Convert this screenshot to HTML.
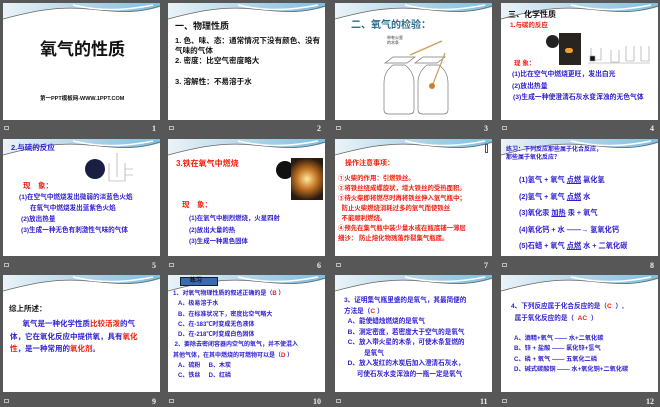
<!DOCTYPE html>
<html><head><meta charset="utf-8"><style>
*{margin:0;padding:0;box-sizing:border-box}
body{width:660px;height:407px;background:#575757;position:relative;overflow:hidden;font-family:"Liberation Sans","Noto Sans CJK SC",sans-serif;font-weight:bold}
.s{position:absolute;width:157px;height:117px;background:#fff;overflow:hidden}
.s svg.h{position:absolute;left:0;top:0}
.t{position:absolute;white-space:nowrap;line-height:1}
.n{position:absolute;color:#eee;font-size:8px;font-family:"Liberation Serif",serif}
.ic{position:absolute;width:5px;height:4px;border:1px solid #bbb}
.b{color:#3020d0}.r{color:#f02010}.k{color:#111}
</style></head><body>

<svg width="0" height="0" style="position:absolute"><defs>
<linearGradient id="g" x1="0" x2="1"><stop offset="0" stop-color="#eaf3f8"/><stop offset="0.6" stop-color="#a8d0e6"/><stop offset="1" stop-color="#7fbfe0"/></linearGradient>
<g id="hd"><path d="M0 0H157V4C130 12 110 8 85 6C55 3 30 8 0 16Z" fill="url(#g)"/><path d="M0 16C30 8 55 3 85 6C110 8 130 12 157 3" fill="none" stroke="#666" stroke-width="0.8"/><path d="M70 2C95 8 120 8 150 2" fill="none" stroke="#fff" stroke-width="1.5"/></g>
</defs></svg>

<!-- Row 1 -->
<div class="s" style="left:3px;top:3px"><svg class="h" width="157" height="20"><use href="#hd"/></svg>
<div class="t k" style="left:37px;top:38px;font-size:17px">氧气的性质</div>
<div class="t k" style="left:37px;top:94px;font-size:5.5px">第一PPT模板网-WWW.1PPT.COM</div></div>
<div class="ic" style="left:4px;top:126px"></div><div class="n" style="left:152px;top:124px">1</div>

<div class="s" style="left:168px;top:3px"><svg class="h" width="157" height="20"><use href="#hd"/></svg>
<div class="t k" style="left:7px;top:19px;font-size:9px">一、物理性质</div>
<div class="t k" style="left:7px;top:33px;font-size:7.6px;line-height:10px;white-space:normal;width:150px">1. 色、味、态：通常情况下没有颜色、没有气味的气体</div>
<div class="t k" style="left:7px;top:54px;font-size:7.6px">2. 密度：比空气密度略大</div>
<div class="t k" style="left:7px;top:75px;font-size:7.6px">3. 溶解性：不易溶于水</div></div>
<div class="ic" style="left:169px;top:126px"></div><div class="n" style="left:317px;top:124px">2</div>

<div class="s" style="left:335px;top:3px"><svg class="h" width="157" height="20"><use href="#hd"/></svg>
<div class="t" style="left:16px;top:18px;font-size:10px;color:#2a6c8c">二、氧气的检验：</div>
<svg style="position:absolute;left:40px;top:28px" width="90" height="85" fill="none" stroke="#777" stroke-width="0.7">
<text x="12" y="8" font-size="4" fill="#777" stroke="none">带有火星</text><text x="12" y="13" font-size="4" fill="#777" stroke="none">的木条</text>
<path d="M10 32l8-6h22l-8 6zM40 32l8-6h22l-8 6z"/><path d="M35 24l32-14" stroke="#c9a060" stroke-width="1.5"/>
<path d="M18 34c-5 4-9 9-9 18v27c0 3 2 4 5 4h20c3 0 5-1 5-4V52c0-9-4-14-9-18z"/><path d="M52 34c-5 4-9 9-9 18v27c0 3 2 4 5 4h20c3 0 5-1 5-4V52c0-9-4-14-9-18z"/>
<path d="M70 22L58 53" stroke="#c9a060" stroke-width="1.2"/><circle cx="57" cy="55" r="3" fill="#c98030" stroke="none"/></svg></div>
<div class="ic" style="left:336px;top:126px"></div><div class="n" style="left:484px;top:124px">3</div>

<div class="s" style="left:501px;top:3px"><svg class="h" width="157" height="20"><use href="#hd"/></svg>
<div class="t k" style="left:7px;top:8px;font-size:8px">三、化学性质</div>
<div class="t r" style="left:9px;top:20px;font-size:6.5px">1.与碳的反应</div>
<div style="position:absolute;left:45px;top:32px;width:13px;height:13px;border-radius:50%;background:#222"></div>
<div style="position:absolute;left:58px;top:30px;width:22px;height:32px;background:#2a2420"></div>
<div style="position:absolute;left:64px;top:45px;width:8px;height:5px;background:#f0a030;border-radius:3px"></div>
<svg style="position:absolute;left:85px;top:35px" width="65" height="26" fill="none" stroke="#999" stroke-width="0.6"><path d="M2 25h62M5 10v12h10V10M25 12v12h8V12M40 8v15h8V8M55 8v15h8V8"/><rect x="4" y="18" width="5" height="5" fill="#111"/></svg>
<div class="t r" style="left:13px;top:58px;font-size:6.5px">现 象：</div>
<div class="t b" style="left:11px;top:69px;font-size:6.8px">(1)比在空气中燃烧更旺，发出白光</div>
<div class="t b" style="left:11px;top:81px;font-size:6.8px">(2)放出热量</div>
<div class="t b" style="left:12px;top:92px;font-size:6.8px">(3)生成一种使澄清石灰水变浑浊的无色气体</div></div>
<div class="ic" style="left:502px;top:126px"></div><div class="n" style="left:650px;top:124px">4</div>

<!-- Row 2 -->
<div class="s" style="left:3px;top:139px"><svg class="h" width="157" height="20"><use href="#hd"/></svg>
<div class="t b" style="left:8px;top:5px;font-size:7.5px">2.与硫的反应</div>
<div style="position:absolute;left:82px;top:20px;width:20px;height:20px;border-radius:50%;background:#1a1e40"></div>
<svg style="position:absolute;left:102px;top:14px" width="30" height="32" fill="none" stroke="#999" stroke-width="0.6"><path d="M12 0v24M4 10v18h16V10M20 16h8M20 22h8"/></svg>
<div class="t r" style="left:20px;top:43px;font-size:7.5px">现　象：</div>
<div class="t b" style="left:16px;top:56px;font-size:6.6px">(1)在空气中燃烧发出微弱的淡蓝色火焰</div>
<div class="t b" style="left:27px;top:67px;font-size:6.6px">在氧气中燃烧发出蓝紫色火焰</div>
<div class="t b" style="left:18px;top:78px;font-size:6.6px">(2)放出热量</div>
<div class="t b" style="left:18px;top:89px;font-size:6.6px">(3)生成一种无色有刺激性气味的气体</div></div>
<div class="ic" style="left:4px;top:263px"></div><div class="n" style="left:152px;top:261px">5</div>

<div class="s" style="left:168px;top:139px"><svg class="h" width="157" height="20"><use href="#hd"/></svg>
<div class="t r" style="left:8px;top:21px;font-size:8px">3.铁在氧气中燃烧</div>
<div style="position:absolute;left:108px;top:22px;width:18px;height:18px;border-radius:50%;background:#111"></div>
<div style="position:absolute;left:123px;top:19px;width:32px;height:42px;background:radial-gradient(circle at 50% 50%,#ffe8a0,#c07020 40%,#2a1a10 80%)"></div>
<div class="t r" style="left:14px;top:62px;font-size:7.5px">现　象：</div>
<div class="t b" style="left:21px;top:77px;font-size:6.4px">(1)在氧气中剧烈燃烧，火星四射</div>
<div class="t b" style="left:21px;top:89px;font-size:6.4px">(2)放出大量的热</div>
<div class="t b" style="left:21px;top:100px;font-size:6.4px">(3)生成一种黑色固体</div></div>
<div class="ic" style="left:169px;top:263px"></div><div class="n" style="left:317px;top:261px">6</div>

<div class="s" style="left:335px;top:139px"><svg class="h" width="157" height="20"><use href="#hd"/></svg>
<div style="position:absolute;left:150px;top:5px;width:3px;height:9px;border:1px solid #3050d0"></div>
<div class="t r" style="left:10px;top:21px;font-size:7px">操作注意事项：</div>
<div class="t r" style="left:3px;top:35px;font-size:6.4px;line-height:10px">①火柴的作用：引燃铁丝。<br>②将铁丝绕成螺旋状，增大铁丝的受热面积。<br>③待火柴即将燃尽时再将铁丝伸入氧气瓶中；<br>&nbsp;&nbsp;防止火柴燃烧消耗过多的氧气而使铁丝<br>&nbsp;&nbsp;不能顺利燃烧。<br>④预先在集气瓶中装少量水或在瓶底铺一薄层<br>细沙：&nbsp;防止熔化物溅落炸裂集气瓶底。</div></div>
<div class="ic" style="left:336px;top:263px"></div><div class="n" style="left:484px;top:261px">7</div>

<div class="s" style="left:501px;top:139px"><svg class="h" width="157" height="20"><use href="#hd"/></svg>
<div class="t b" style="left:5px;top:7px;font-size:6px;line-height:8px">练习：下列反应那些属于化合反应，<br>那些属于氧化反应？</div>
<div class="t b" style="left:18px;top:33px;font-size:7.2px;line-height:16.5px">(1)氢气 + 氧气 <u>点燃</u> 氯化氢<br>(2)氢气 + 氧气 <u>点燃</u> 水<br>(3)氧化汞 <u>加热</u> 汞 + 氧气<br>(4)氧化钙 + 水 ——→ 氢氧化钙<br>(5)石蜡 + 氧气 <u>点燃</u> 水 + 二氧化碳</div></div>
<div class="ic" style="left:502px;top:263px"></div><div class="n" style="left:650px;top:261px">8</div>

<!-- Row 3 -->
<div class="s" style="left:3px;top:275px"><svg class="h" width="157" height="20"><use href="#hd"/></svg>
<div class="t k" style="left:6px;top:30px;font-size:7.5px">综上所述：</div>
<div class="t b" style="left:7px;top:43px;font-size:7.5px;line-height:12.5px">&nbsp;&nbsp;&nbsp;&nbsp;&nbsp;&nbsp;氧气是一种化学性质<span class="r">比较活泼</span>的气<br>体，它在氧化反应中提供氧，具有<span class="r">氧化</span><br><span class="r">性</span>，是一种常用的<span class="r">氧化剂</span>。</div></div>
<div class="ic" style="left:4px;top:399px"></div><div class="n" style="left:152px;top:397px">9</div>

<div class="s" style="left:168px;top:275px"><svg class="h" width="157" height="20"><use href="#hd"/></svg>
<div style="position:absolute;left:12px;top:2px;width:38px;height:9px;background:#3a6ab0;border:1px solid #123"></div>
<div class="t" style="left:22px;top:3px;font-size:6px;color:#111">练习</div>
<div class="t b" style="left:5px;top:14px;font-size:6px;line-height:10.3px">1、对氧气物理性质的叙述正确的是（<span class="r">B</span> ）<br>&nbsp;&nbsp;&nbsp;A、极易溶于水<br>&nbsp;&nbsp;&nbsp;B、在标准状况下，密度比空气略大<br>&nbsp;&nbsp;&nbsp;C、在-183℃时变成无色液体<br>&nbsp;&nbsp;&nbsp;D、在-218℃时变成白色固体<br>&nbsp;2、要除去密闭容器内空气的氧气，并不使混入<br>其他气体，在其中燃烧的可燃物可以是（<span class="r">D</span> ）<br>&nbsp;&nbsp;&nbsp;A、硫粉&nbsp;&nbsp;&nbsp;&nbsp;&nbsp;B、木炭<br>&nbsp;&nbsp;&nbsp;C、铁丝&nbsp;&nbsp;&nbsp;&nbsp;&nbsp;D、红磷</div></div>
<div class="ic" style="left:169px;top:399px"></div><div class="n" style="left:313px;top:397px">10</div>

<div class="s" style="left:335px;top:275px"><svg class="h" width="157" height="20"><use href="#hd"/></svg>
<div class="t b" style="left:9px;top:21px;font-size:6.6px;line-height:10.5px">3、证明集气瓶里盛的是氧气，其最简便的<br>方法是（<span class="r">C</span> ）<br>&nbsp;&nbsp;A、能使蜡烛燃烧的是氧气<br>&nbsp;&nbsp;B、测定密度，若密度大于空气的是氧气<br>&nbsp;&nbsp;C、放入带火星的木条，可使木条复燃的<br>&nbsp;&nbsp;&nbsp;&nbsp;&nbsp;&nbsp;&nbsp;&nbsp;&nbsp;&nbsp;&nbsp;是氧气<br>&nbsp;&nbsp;D、放入发红的木炭后加入澄清石灰水，<br>&nbsp;&nbsp;&nbsp;&nbsp;&nbsp;&nbsp;&nbsp;可使石灰水变浑浊的一瓶一定是氧气</div></div>
<div class="ic" style="left:336px;top:399px"></div><div class="n" style="left:480px;top:397px">11</div>

<div class="s" style="left:501px;top:275px"><svg class="h" width="157" height="20"><use href="#hd"/></svg>
<div class="t b" style="left:10px;top:26px;font-size:6.6px;line-height:12px">4、下列反应属于化合反应的是（<span class="r">C</span>&nbsp;&nbsp;）,<br>&nbsp;&nbsp;属于氧化反应的是（&nbsp;&nbsp;<span class="r">AC</span>&nbsp;&nbsp;）</div>
<div class="t b" style="left:13px;top:59px;font-size:6.2px;line-height:10.3px">A、酒精+氧气 —— 水+二氧化碳<br>B、锌 + 盐酸 —— 氯化锌+氢气<br>C、磷 + 氧气 —— 五氧化二磷<br>D、碱式碳酸铜 —— 水+氧化铜+二氧化碳</div></div>
<div class="ic" style="left:502px;top:399px"></div><div class="n" style="left:646px;top:397px">12</div>
</body></html>
